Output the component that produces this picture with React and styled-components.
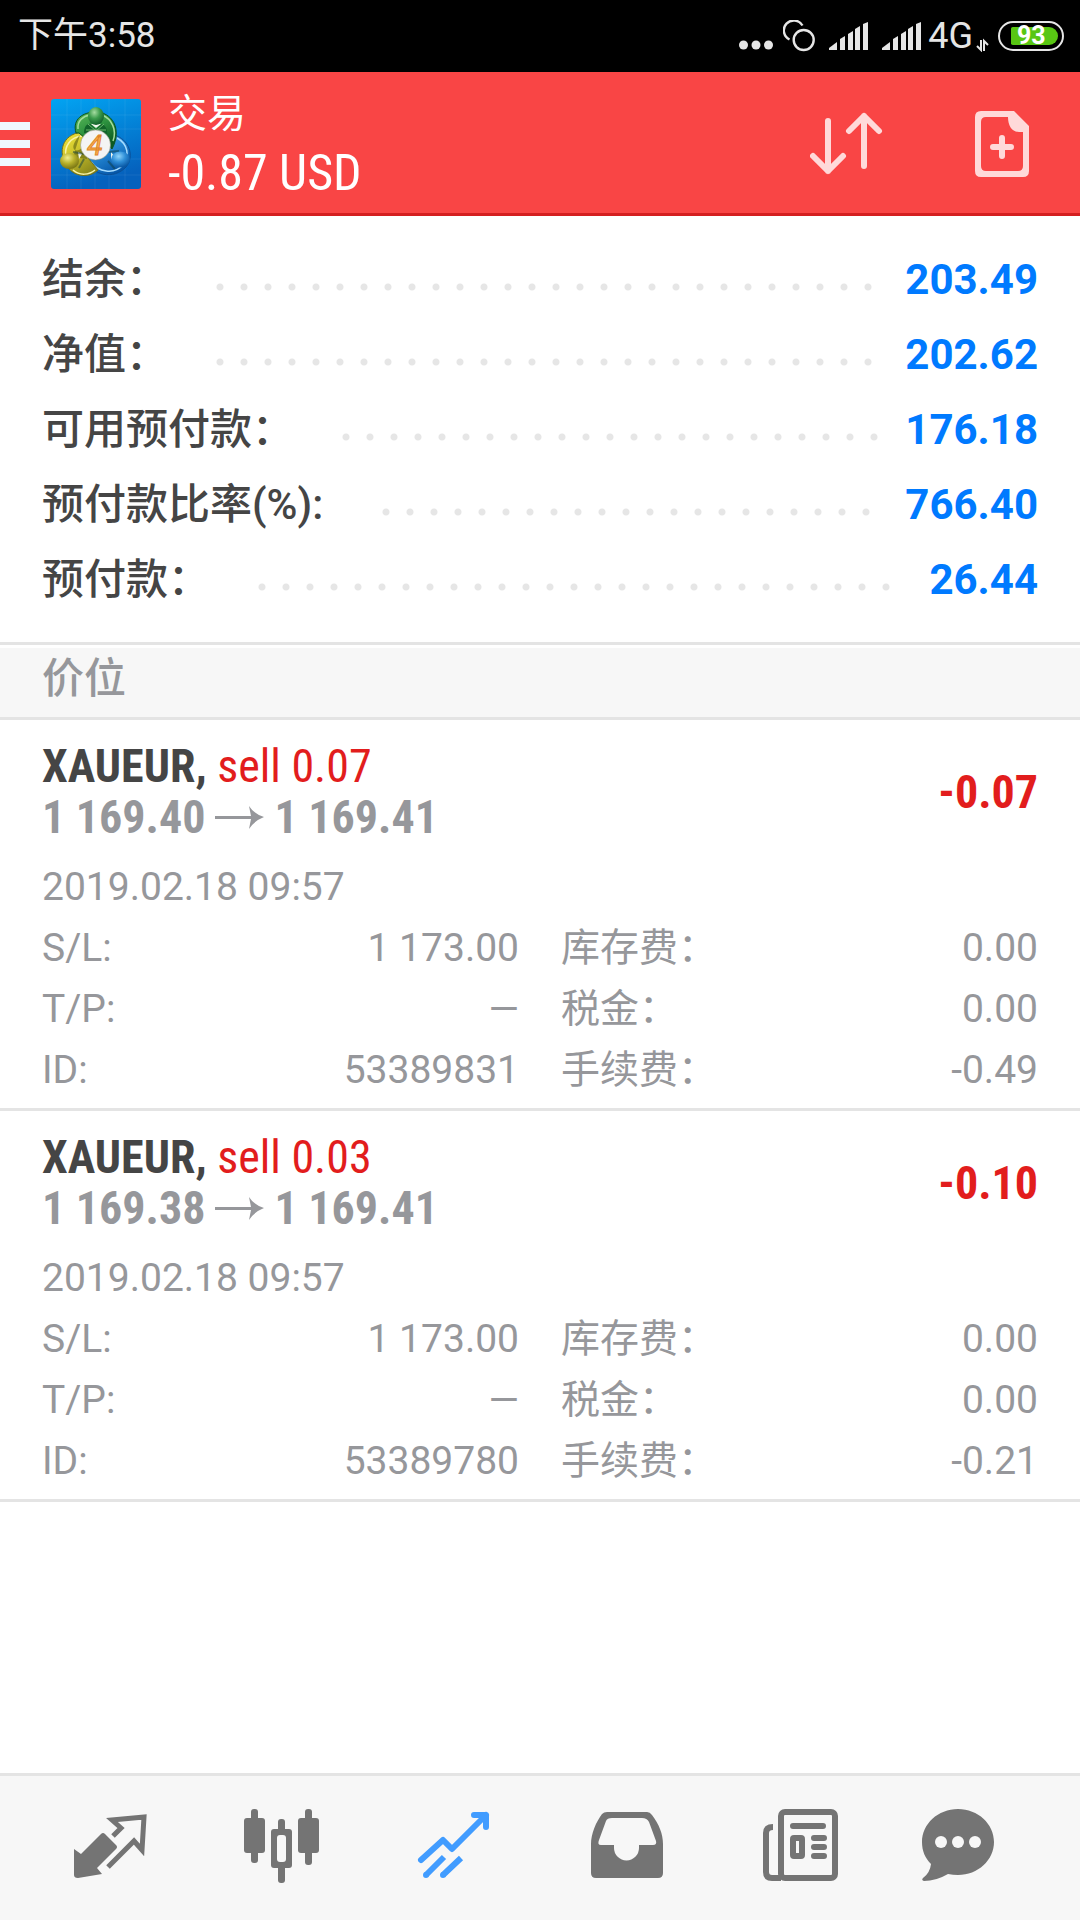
import React from "react";
import styled, { createGlobalStyle } from "styled-components";

const sans = `Roboto, "Noto Sans CJK SC", sans-serif`;
const condensed = `"Roboto Condensed", "Liberation Sans Narrow", Roboto, "Noto Sans CJK SC", sans-serif`;

const account = [
  { label: "结余：", value: "203.49" },
  { label: "净值：", value: "202.62" },
  { label: "可用预付款：", value: "176.18" },
  { label: "预付款比率(%): ", value: "766.40" },
  { label: "预付款：", value: "26.44" },
];

const positions = [
  {
    id: "53389831",
    symbol: "XAUEUR",
    side: "sell 0.07",
    open: "1 169.40",
    current: "1 169.41",
    profit: "-0.07",
    time: "2019.02.18 09:57",
    stopLoss: "1 173.00",
    takeProfit: "—",
    swap: "0.00",
    tax: "0.00",
    commission: "-0.49",
  },
  {
    id: "53389780",
    symbol: "XAUEUR",
    side: "sell 0.03",
    open: "1 169.38",
    current: "1 169.41",
    profit: "-0.10",
    time: "2019.02.18 09:57",
    stopLoss: "1 173.00",
    takeProfit: "—",
    swap: "0.00",
    tax: "0.00",
    commission: "-0.21",
  },
];

const SignalIcon = () => (
  <svg width="39" height="28" viewBox="0 0 39 28" fill="#e6e6e6">
    <path d="M0 28V26L8 20V28Z" />
    <path d="M11 28V17L16 14V28Z" />
    <path d="M19 28V12L24 9V28Z" />
    <path d="M26 28V7L31 4V28Z" />
    <path d="M34 28V2L39 0V28Z" />
  </svg>
);

function StatusBar() {
  return (
    <StatusWrapper>
      <Clock>下午3:58</Clock>
      <StatusItem>
        <svg width="34" height="32" viewBox="0 0 34 32" fill="#e6e6e6">
          <circle cx="4.5" cy="25" r="4.5" />
          <circle cx="17" cy="25" r="4.5" />
          <circle cx="29.5" cy="25" r="4.5" />
        </svg>
      </StatusItem>
      <StatusItem $gap={10}>
        <svg width="32" height="32" viewBox="0 0 32 32" fill="none" stroke="#e6e6e6" strokeWidth="2.4">
          <path d="M6.5 19.5A10 10 0 1 1 19.5 5.5" />
          <circle cx="20.7" cy="20" r="10" />
        </svg>
      </StatusItem>
      <StatusItem $gap={14}>
        <SignalIcon />
      </StatusItem>
      <StatusItem $gap={14}>
        <SignalIcon />
      </StatusItem>
      <Network>4G</Network>
      <StatusItem $gap={3}>
        <svg width="13" height="32" viewBox="0 0 13 32" fill="none" stroke="#e6e6e6" strokeWidth="2">
          <path d="M5 20V30L1 26M8 31V21L12 25" />
        </svg>
      </StatusItem>
      <Battery>
        <BatteryLevel>93</BatteryLevel>
      </Battery>
    </StatusWrapper>
  );
}

const Logo = () => (
  <svg width="90" height="90" viewBox="0 0 90 90">
    <defs>
      <linearGradient id="tile" x1="0" y1="0" x2="0.3" y2="1">
        <stop offset="0" stopColor="#02a4f2" />
        <stop offset="1" stopColor="#0561bd" />
      </linearGradient>
      <linearGradient id="green" x1="0" y1="0" x2="0.6" y2="1">
        <stop offset="0" stopColor="#5cb85a" />
        <stop offset="0.5" stopColor="#2f9440" />
        <stop offset="1" stopColor="#0c5a22" />
      </linearGradient>
      <linearGradient id="yellow" x1="0" y1="0" x2="0.6" y2="1">
        <stop offset="0" stopColor="#f5e93a" />
        <stop offset="0.5" stopColor="#cbc22c" />
        <stop offset="1" stopColor="#8d8a1c" />
      </linearGradient>
      <linearGradient id="blue" x1="0" y1="0" x2="0.6" y2="1">
        <stop offset="0" stopColor="#58b8f2" />
        <stop offset="0.5" stopColor="#2488d4" />
        <stop offset="1" stopColor="#0656a8" />
      </linearGradient>
      <radialGradient id="greenHead" cx="0.4" cy="0.3" r="0.7">
        <stop offset="0" stopColor="#a5dca0" />
        <stop offset="0.5" stopColor="#3c9c4c" />
        <stop offset="1" stopColor="#14602a" />
      </radialGradient>
      <radialGradient id="yellowHead" cx="0.4" cy="0.3" r="0.7">
        <stop offset="0" stopColor="#f2ee90" />
        <stop offset="0.5" stopColor="#b9b22c" />
        <stop offset="1" stopColor="#7a7614" />
      </radialGradient>
      <radialGradient id="blueHead" cx="0.4" cy="0.3" r="0.7">
        <stop offset="0" stopColor="#8fd4fa" />
        <stop offset="0.5" stopColor="#2f8fd8" />
        <stop offset="1" stopColor="#0a58a4" />
      </radialGradient>
    </defs>
    <rect width="90" height="90" rx="3" fill="url(#tile)" />
    <path d="M16 0V90M30 0V90M44 0V90M58 0V90M74 0V90M0 16H90M0 30H90M0 60H90M0 76H90" stroke="#fff" strokeOpacity="0.07" />
    <path d="M58 50L63 36C78 40 84 57 75 68C63 81 41 77 35 60Z" fill="url(#blue)" stroke="#0b4f96" />
    <path d="M66 39C77 45 79 57 72 66C63 76 47 73 40 63" fill="none" stroke="#a6dcff" strokeWidth="1.5" />
    <path d="M36 33C16 32 7 47 13 61C19 79 38 80 47 71L37 59L34 45Z" fill="url(#yellow)" stroke="#75721a" />
    <path d="M31 37C19 38 13 48 15 57M22 71C29 77 38 76 44 71" fill="none" stroke="#f8f3a8" strokeWidth="1.5" />
    <path d="M29 36C18 48 23 53 28 51L36 46V60L22 58Z" fill="#6f7014" fillOpacity="0.7" />
    <path d="M25 34C21 20 32 13 45 13C60 13 72 29 61 50L52 40H35L28 34Z" fill="url(#green)" stroke="#0b5420" />
    <path d="M27 30C26 22 32 17 39 16M51 16C61 20 66 31 62 42" fill="none" stroke="#a3dc9c" strokeWidth="1.5" />
    <path d="M33 34C33 28 36 24 40 25L45 31L50 25C55 26 57 31 56 38Z" fill="#12642a" />
    <path d="M37 25L45 32L53 25M35 31H55" fill="none" stroke="#6cba6c" />
    <path d="M40 25H50L45 29ZM27 53L31 55L28 60ZM60 53L63 57L60 61Z" fill="#f4f7ee" />
    <path d="M22 53L33 55M28 69L33 60M57 53L68 52M57 62L64 70" fill="none" stroke="#103c40" strokeOpacity="0.5" strokeWidth="2" />
    <ellipse cx="45" cy="17" rx="8" ry="9" fill="url(#greenHead)" />
    <ellipse cx="18.5" cy="62" rx="9.5" ry="8" fill="url(#yellowHead)" />
    <ellipse cx="69.5" cy="60.5" rx="9.5" ry="8" fill="url(#blueHead)" />
    <circle cx="44.5" cy="46" r="15" fill="#f4f4f4" stroke="#8a8f7a" strokeWidth="0.5" />
    <text x="44" y="56" textAnchor="middle" fontFamily="Roboto, sans-serif" fontSize="28" fontWeight="400" fontStyle="italic" fill="#fbb04c" stroke="#e0842a" strokeWidth="1">
      4
    </text>
  </svg>
);

function Header() {
  return (
    <HeaderWrapper>
      <IconButton aria-label="菜单">
        <svg width="30" height="44" viewBox="0 0 30 44" fill="#f0f8ff">
          <path d="M0 0H30V8H0ZM0 18H30V26H0ZM0 36H30V44H0Z" />
        </svg>
      </IconButton>
      <Logo />
      <Heading>
        <Title>交易</Title>
        <Total>-0.87 USD</Total>
      </Heading>
      <Actions>
        <IconButton aria-label="排序">
          <svg width="74" height="64" viewBox="0 0 74 64" fill="none" stroke="#ffd9d9" strokeWidth="6" strokeLinecap="round" strokeLinejoin="round">
            <path d="M18 9V59M3 44L18 59L33 44" />
            <path d="M54 54V4M39 19L54 4L69 19" />
          </svg>
        </IconButton>
        <IconButton aria-label="新订单">
          <svg width="54" height="66" viewBox="0 0 54 66">
            <path
              fill="#ffd9d9"
              fillRule="evenodd"
              d="M6 0H39L54 15V60Q54 66 48 66H6Q0 66 0 60V6Q0 0 6 0ZM11 6Q6 6 6 11V55Q6 60 11 60H43Q48 60 48 55V21H44C37 21 33 15 33 6Z"
            />
            <path d="M27 27V45M18 36H36" stroke="#ffd9d9" strokeWidth="6" strokeLinecap="round" />
          </svg>
        </IconButton>
      </Actions>
    </HeaderWrapper>
  );
}

function Position({ item }) {
  return (
    <PositionWrapper>
      <Summary>
        <div>
          <Deal>
            <Symbol>{item.symbol},</Symbol> {item.side}
          </Deal>
          <Prices>
            {item.open}
            <svg width="49" height="24" viewBox="0 0 49 24" fill="#96979b">
              <path d="M0 10H36L34 0Q39 8 49 11Q39 15 34 23L36 13H0Z" />
            </svg>
            {item.current}
          </Prices>
        </div>
        <Profit>{item.profit}</Profit>
      </Summary>
      <p>{item.time}</p>
      <Details>
        <Detail>
          <dt>S/L:</dt>
          <dd>{item.stopLoss}</dd>
        </Detail>
        <Detail>
          <dt>库存费：</dt>
          <dd>{item.swap}</dd>
        </Detail>
        <Detail>
          <dt>T/P:</dt>
          <dd>{item.takeProfit}</dd>
        </Detail>
        <Detail>
          <dt>税金：</dt>
          <dd>{item.tax}</dd>
        </Detail>
        <Detail>
          <dt>ID:</dt>
          <dd>{item.id}</dd>
        </Detail>
        <Detail>
          <dt>手续费：</dt>
          <dd>{item.commission}</dd>
        </Detail>
      </Details>
    </PositionWrapper>
  );
}

const QuotesIcon = () => (
  <>
    <path d="M50 73L57 78L77 58Q79 56 81 58L92 69Q94 71 92 73L73 92L78 98L54 102Q50 102 50 99Z" fill="currentColor" />
    <path d="M89 60L97 52L88 44L120 41L118 74L110 65L84 91" fill="none" stroke="currentColor" strokeWidth="5" />
  </>
);

const ChartIcon = () => (
  <g fill="currentColor">
    <rect x="48" y="42" width="21" height="35" rx="3" />
    <rect x="55" y="33" width="7" height="54" rx="3" />
    <rect x="82" y="43" width="7" height="64" rx="3" />
    <rect x="75" y="53" width="21" height="39" rx="3" />
    <rect x="81" y="59" width="9" height="27" rx="3" fill="#f7f7f7" />
    <rect x="102" y="42" width="21" height="35" rx="3" />
    <rect x="109" y="33" width="7" height="56" rx="3" />
  </g>
);

const TradeIcon = () => (
  <g fill="none" stroke="currentColor" strokeWidth="6" strokeLinejoin="round">
    <path d="M53 84L75 64L84 73L118 39M106 39H118V51" strokeLinecap="round" />
    <path d="M112 39L118 45" />
    <path d="M58 99L76 81M75 99L93 82" />
    <path d="M58 99H58M75 99H75" strokeLinecap="round" />
  </g>
);

const HistoryIcon = () => (
  <path
    fill="currentColor"
    fillRule="evenodd"
    d="M67 36H107Q110 36 112 39C119 48 123 58 123 68V97Q123 102 118 102H56Q51 102 51 97V68C51 58 56 46 62 38Q64 36 67 36ZM72 42Q67 42 66 45L59 64Q57 69 61 69H74V72A12 12 0 0 0 99 72V69H113Q117 69 116 65L109 46Q107 42 102 42Z"
  />
);

const NewsIcon = () => (
  <g fill="none" stroke="currentColor" strokeWidth="6">
    <rect x="69" y="36" width="54" height="66" rx="4" />
    <path d="M61 51Q54 51 54 57V96Q54 102 60 102H69" />
    <rect x="81" y="62" width="9" height="18" rx="1" />
    <path d="M81 50H111M102 62H112M102 71H112M102 80H112" strokeLinecap="round" />
  </g>
);

const MessagesIcon = () => (
  <>
    <path d="M74 33C94 33 110 48 110 66C110 84 94 99 74 99Q69 99 64 98Q52 105 40 105Q37 104 39 102Q46 97 47 88C41 82 38 75 38 66C38 48 54 33 74 33Z" fill="currentColor" />
    <circle cx="57" cy="66" r="6" fill="#f7f7f7" />
    <circle cx="74" cy="66" r="6" fill="#f7f7f7" />
    <circle cx="91" cy="66" r="6" fill="#f7f7f7" />
  </>
);

const tabs = [
  { name: "行情", Icon: QuotesIcon },
  { name: "图表", Icon: ChartIcon },
  { name: "交易", Icon: TradeIcon, active: true },
  { name: "历史", Icon: HistoryIcon },
  { name: "新闻", Icon: NewsIcon },
  { name: "消息", Icon: MessagesIcon },
];

function App() {
  return (
    <Screen>
      <GlobalStyle />
      <StatusBar />
      <Header />
      <Content>
        <Account>
          {account.map((row) => (
            <AccountRow key={row.label}>
              <dt>{row.label}</dt>
              <Leader />
              <dd>{row.value}</dd>
            </AccountRow>
          ))}
        </Account>
        <SectionTitle>价位</SectionTitle>
        {positions.map((item) => (
          <Position key={item.id} item={item} />
        ))}
      </Content>
      <TabBar>
        {tabs.map(({ name, Icon, active }) => (
          <Tab key={name} aria-label={name} $active={active}>
            <svg width="172" height="144" viewBox="0 0 172 144">
              <Icon />
            </svg>
          </Tab>
        ))}
      </TabBar>
    </Screen>
  );
}

const GlobalStyle = createGlobalStyle`
  * {
    box-sizing: border-box;
  }
  body {
    margin: 0;
    background: #fff;
    font-family: ${sans};
  }
  dl, dd, h1, h2, p {
    margin: 0;
    font-weight: inherit;
  }
  svg {
    display: block;
    flex-shrink: 0;
  }
`;

const Screen = styled.div`
  display: flex;
  flex-direction: column;
  min-height: 100vh;
`;

const StatusWrapper = styled.div`
  display: flex;
  align-items: center;
  height: 72px;
  padding: 0 16px 0 18px;
  background: #000;
  color: #e6e6e6;
`;

const Clock = styled.span`
  margin-right: auto;
  font-size: 35px;
  line-height: 72px;
`;

const StatusItem = styled.span`
  margin-left: ${(props) => props.$gap || 0}px;
`;

const Network = styled.span`
  margin-left: 7px;
  font-size: 36px;
  line-height: 72px;
`;

const Battery = styled.span`
  display: flex;
  width: 66px;
  height: 30px;
  margin-left: 9px;
  padding: 4px 4px 4px 11px;
  border: 2px solid #e6e6e6;
  border-radius: 15px;
`;

const BatteryLevel = styled.span`
  flex: 1;
  padding-left: 6px;
  border-radius: 2px 10px 10px 2px;
  background: #58c613;
  color: #fff;
  font-size: 25px;
  font-weight: 700;
  line-height: 18px;
`;

const HeaderWrapper = styled.header`
  display: flex;
  align-items: center;
  height: 144px;
  padding: 3px 51px 0 0;
  gap: 21px;
  border-bottom: 3px solid #d41f20;
  background: #f94545;
  color: #fff;
`;

const IconButton = styled.button`
  padding: 0;
  border: 0;
  background: none;
`;

const Heading = styled.div`
  flex: 1;
  padding-left: 6px;
`;

const Title = styled.h1`
  font-size: 39px;
  line-height: 58px;
`;

const Total = styled.p`
  font-family: ${condensed};
  font-size: 50px;
  line-height: 60px;
  white-space: nowrap;
`;

const Actions = styled.div`
  display: flex;
  align-items: center;
  gap: 91px;
`;

const Content = styled.main`
  flex: 1;
`;

const Account = styled.dl`
  padding: 26px 42px 25px;
  border-bottom: 3px solid #e4e4e4;
  font-size: 42px;
  line-height: 75px;
`;

const AccountRow = styled.div`
  display: flex;
  align-items: center;

  dt {
    color: #454545;
    font-weight: 500;
    white-space: pre;
  }

  dd {
    color: #007aff;
    font-weight: 700;
  }
`;

const Leader = styled.span`
  flex: 1;
  height: 8px;
  margin: 15px 24px 0 48px;
  background: radial-gradient(circle at 4px 4px, #e6e6e6 3px, transparent 4px) 0 0 / 24px 8px repeat-x;
`;

const SectionTitle = styled.h2`
  margin-top: 3px;
  padding: 0 42px 7px;
  border-bottom: 3px solid #e4e4e4;
  background: #f7f7f7;
  color: #96979b;
  font-size: 42px;
  font-weight: 500;
  line-height: 62px;
`;

const PositionWrapper = styled.article`
  padding: 21px 42px 7px;
  border-bottom: 3px solid #e4e4e4;
  color: #96979b;
  font-size: 39px;
  line-height: 61px;
`;

const Summary = styled.div`
  display: flex;
  align-items: center;
  justify-content: space-between;
  margin-bottom: 14px;
  font-family: ${condensed};
  font-size: 46px;
  line-height: 51px;
`;

const Deal = styled.p`
  color: #e21d1d;
`;

const Symbol = styled.span`
  color: #454545;
  font-weight: 700;
`;

const Prices = styled.p`
  display: flex;
  align-items: center;
  gap: 10px;
  font-weight: 700;
`;

const Profit = styled.span`
  color: #e21d1d;
  font-weight: 700;
`;

const Details = styled.dl`
  display: grid;
  grid-template-columns: 1fr 1fr;
  column-gap: 42px;
`;

const Detail = styled.div`
  display: flex;
  justify-content: space-between;
`;

const TabBar = styled.nav`
  display: flex;
  padding: 0 24px;
  border-top: 3px solid #e4e4e4;
  background: #f7f7f7;
`;

const Tab = styled.button`
  flex: 1;
  padding: 0;
  border: 0;
  background: none;
  color: ${(props) => (props.$active ? "#419cff" : "#747474")};

  svg {
    width: 100%;
  }
`;

export default App;
